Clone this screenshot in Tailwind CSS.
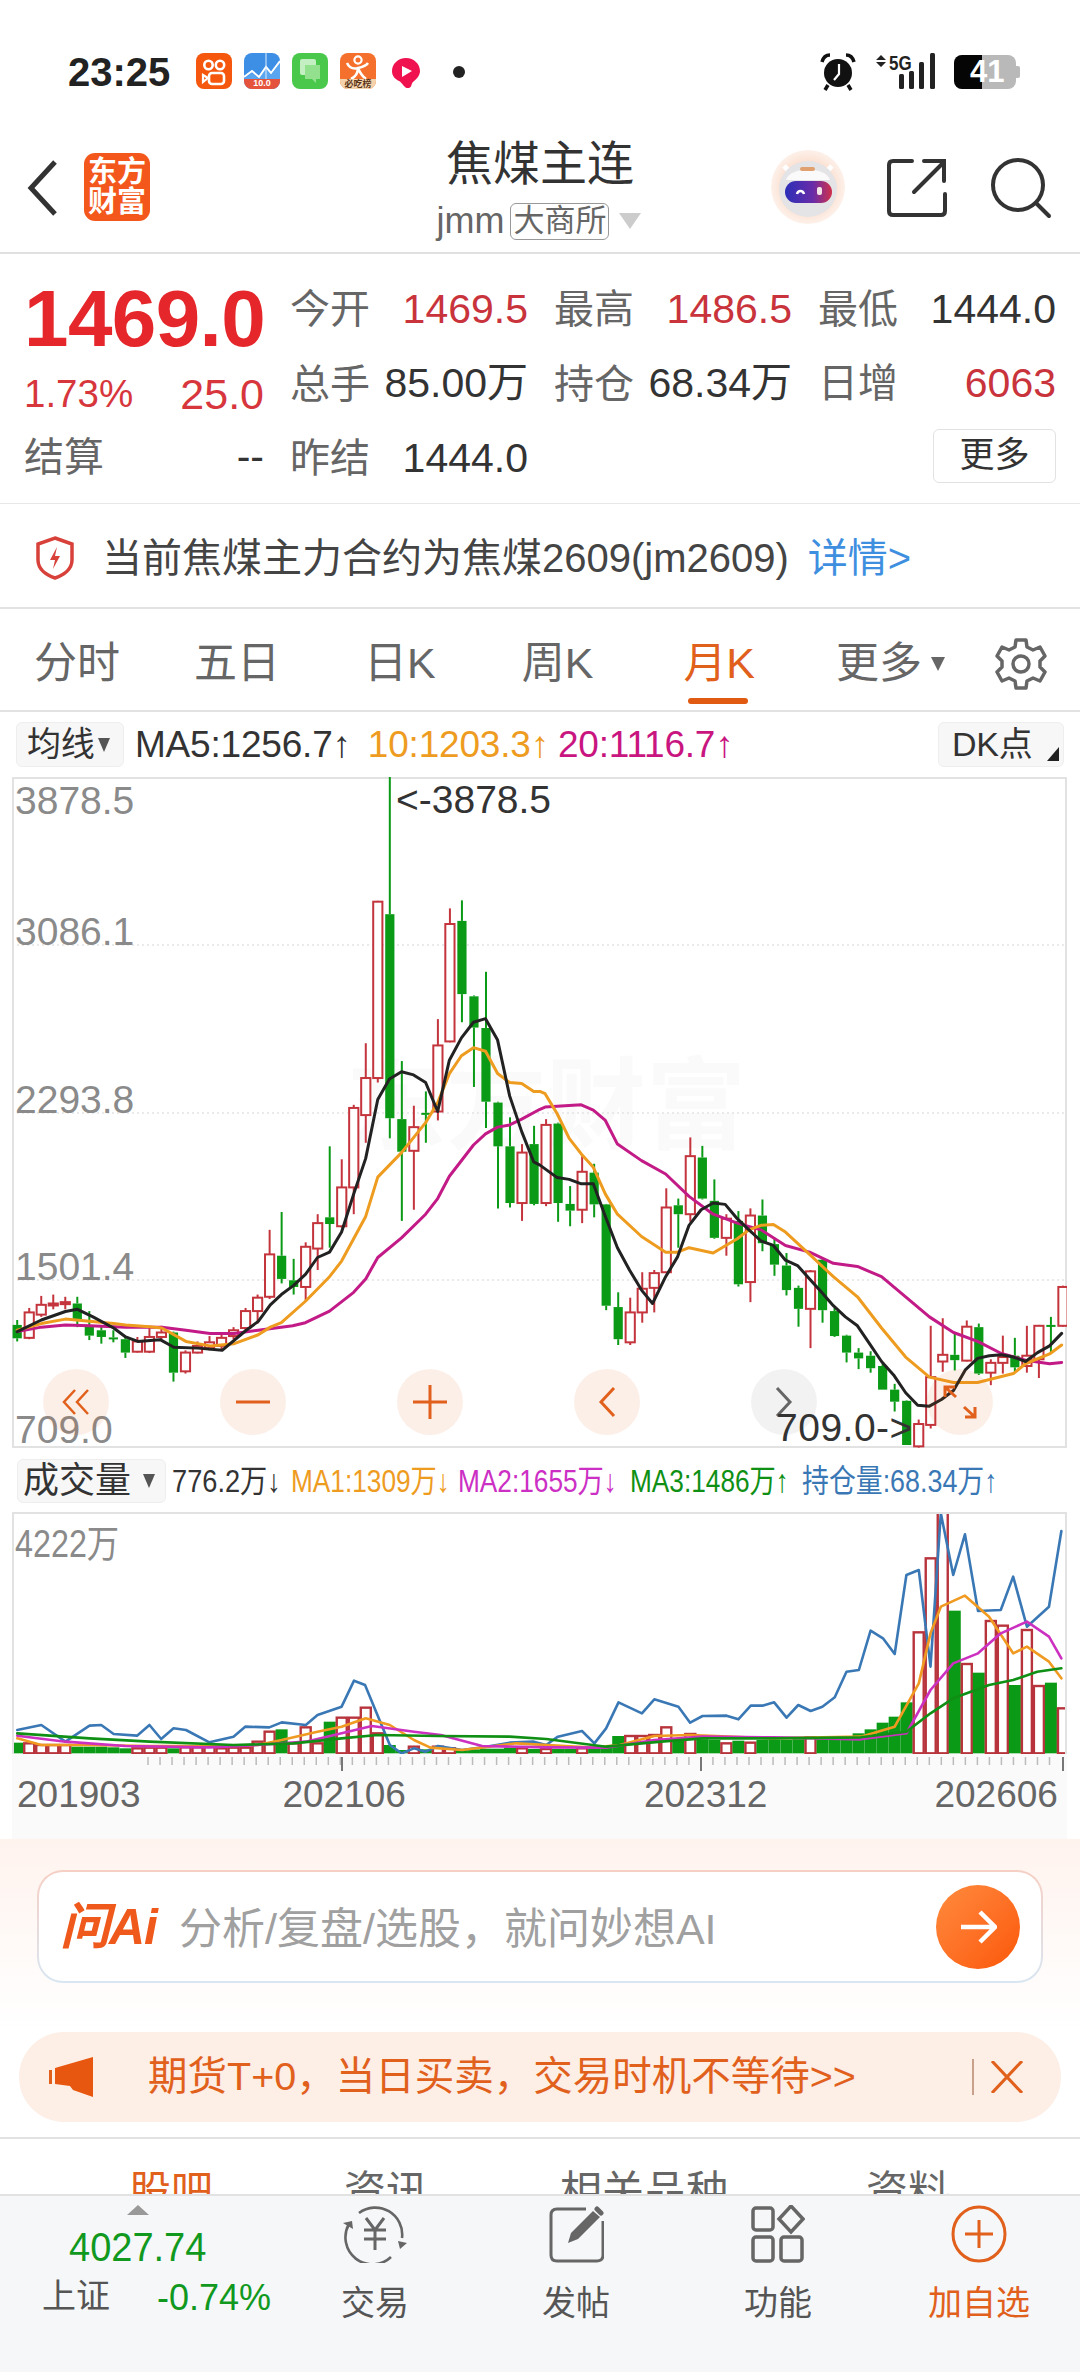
<!DOCTYPE html>
<html lang="zh">
<head>
<meta charset="UTF-8">
<title>焦煤主连</title>
<script src="https://cdn.jsdelivr.net/npm/@tailwindcss/browser@4"></script>
</head>
<body class="bg-white">
<div class="w-[1080px] h-[2372px] overflow-hidden flex flex-col bg-white text-[#333] font-['Liberation_Sans','Noto_Sans_CJK_SC',sans-serif]">

  <!-- status bar -->
  <div class="h-[115px] shrink-0 flex items-start pt-[53px] pl-[68px] pr-[60px]">
    <span class="w-[128px] h-[38px] leading-[38px] text-[40px] font-bold text-[#222]">23:25</span>
    <div class="flex items-start gap-[12px] h-[37px]">
      <svg width="36" height="36" viewBox="0 0 36 36"><rect width="36" height="36" rx="8" fill="#f4570d"/><circle cx="12.5" cy="12" r="4.2" fill="none" stroke="#fff" stroke-width="2.6"/><circle cx="24" cy="12" r="4.2" fill="none" stroke="#fff" stroke-width="2.6"/><rect x="13" y="20" width="15" height="11" rx="3" fill="none" stroke="#fff" stroke-width="2.6"/><path d="M12 25l-5-3v7z" fill="none" stroke="#fff" stroke-width="2.2"/></svg>
      <div class="relative w-[36px] h-[36px] rounded-[8px] overflow-hidden bg-[#3d8fe6]">
        <svg class="absolute inset-0" width="36" height="36" viewBox="0 0 36 36"><path d="M0 26L8 20l7 6 7-10 5 6 9-12v16H0z" fill="#5aa5ef"/><path d="M0 24l8-6 7 6 7-10 5 6 9-12" fill="none" stroke="#fff" stroke-width="2"/><path d="M22 0v27" stroke="#dfeefc" stroke-width="1"/><path d="M0 26h36v10H0z" fill="#e5533c"/></svg>
        <span class="absolute left-0 right-0 bottom-[1px] text-center text-[9px] leading-[10px] font-bold text-white">10.0</span>
      </div>
      <svg width="36" height="36" viewBox="0 0 36 36"><rect width="36" height="36" rx="8" fill="#49c84b"/><rect x="8" y="6" width="16" height="16" rx="2" fill="#c4efc2"/><path d="M13 12h15v14h-4v4l-4-4h-7z" fill="#93e08f"/></svg>
      <div class="relative w-[36px] h-[36px] rounded-[8px] overflow-hidden bg-[#f4702c]">
        <svg class="absolute inset-0" width="36" height="36" viewBox="0 0 36 36"><circle cx="18" cy="7" r="3.6" fill="none" stroke="#fff" stroke-width="2.2"/><path d="M7 10c3 6 8 6 11 5 5-1 8-2 10-5M18 15c0 6-3 9-7 11M18 15c2 5 4 8 8 11" fill="none" stroke="#fff" stroke-width="2.6"/></svg>
        <span class="absolute left-0 right-0 bottom-0 h-[10px] bg-[#f3d2ac] text-center text-[9px] leading-[10px] font-bold text-[#5a3418] whitespace-nowrap">必吃榜</span>
      </div>
      <svg class="ml-[4px] mt-[4px]" width="28" height="32" viewBox="0 0 28 32"><path d="M14 1C6 1 0 7 0 14c0 5 3 8 7 10 4 2 5 8 10 7 3-1 2-4 4-6 4-3 7-7 7-11C28 7 22 1 14 1z" fill="#f0124f"/><path d="M10 9l10 5-10 6z" fill="#fff"/></svg>
      <span class="ml-[21px] mt-[13px] w-[12px] h-[12px] rounded-full bg-[#222]"></span>
    </div>
    <div class="ml-auto flex items-start h-[37px]">
      <svg width="36" height="38" viewBox="0 0 36 38"><circle cx="18" cy="20" r="14" fill="#111"/><path d="M2 9c1-4 4-7 8-7M34 9c-1-4-4-7-8-7M8 32l-3 5M28 32l3 5" stroke="#111" stroke-width="3.5" fill="none"/><path d="M19 11v10l-5 6" stroke="#fff" stroke-width="2.2" fill="none"/></svg>
      <div class="relative w-[60px] h-[37px] ml-[20px]">
        <svg class="absolute left-0 top-0" width="60" height="37" viewBox="0 0 60 37"><path d="M0 7l5-5 5 5zM0 9l5 5 5-5z" fill="#222"/><rect x="23" y="21" width="5" height="15" rx="1.5" fill="#222"/><rect x="33" y="18" width="5" height="18" rx="1.5" fill="#222"/><rect x="43" y="9" width="5" height="27" rx="1.5" fill="#222"/><rect x="54" y="0" width="5" height="36" rx="1.5" fill="#222"/></svg>
        <span class="absolute left-[13px] top-[0px] text-[20px] leading-[20px] font-bold text-[#222] inline-block scale-x-[0.85] origin-left">5G</span>
      </div>
      <div class="relative w-[62px] h-[34px] ml-[18px] mt-[2px] rounded-[8px] bg-[#b9b9b9] overflow-hidden">
        <div class="absolute left-0 top-0 bottom-0 w-[28px] bg-[#050505]"></div>
        <span class="absolute left-[16px] top-0 leading-[34px] text-[31px] font-bold text-white">41</span>
      </div>
      <div class="w-[4px] h-[12px] mt-[13px] rounded-r-[2px] bg-[#b9b9b9]"></div>
    </div>
  </div>

  <!-- header -->
  <div class="h-[139px] shrink-0 flex relative border-b-2 border-[#e0e0e0]">
    <svg class="absolute left-[26px] top-[44px]" width="34" height="58" viewBox="0 0 34 58"><path d="M29 3L5 29l24 26" fill="none" stroke="#333" stroke-width="5"/></svg>
    <div class="absolute left-[84px] top-[38px] w-[66px] h-[68px] rounded-[11px] bg-[#f4571c] text-white font-bold text-[29px] leading-[30px] text-center pt-[4px]">东方<br>财富</div>
    <div class="w-full flex flex-col items-center pt-[23px]">
      <span class="text-[47px] leading-[52px] text-[#333]">焦煤主连</span>
      <div class="flex items-center mt-[12px] pr-[2px] h-[38px]">
        <span class="text-[36px] leading-[36px] text-[#666]">jmm</span>
        <span class="ml-[6px] px-[2px] h-[37px] leading-[33px] border border-[#999] rounded-[6px] text-[31px] text-[#666] whitespace-nowrap">大商所</span>
        <svg class="ml-[10px]" width="22" height="16" viewBox="0 0 22 16"><path d="M0 0h22L11 16z" fill="#ccc"/></svg>
      </div>
    </div>
    <svg class="absolute left-[770px] top-[33px]" width="76" height="78" viewBox="0 0 76 78"><defs><linearGradient id="visor"><stop offset="0" stop-color="#2b2fb8"/><stop offset="0.6" stop-color="#6a2ca8"/><stop offset="1" stop-color="#d0304a"/></linearGradient><radialGradient id="halo"><stop offset="0.6" stop-color="#fbdccb"/><stop offset="1" stop-color="#fdf1ea"/></radialGradient></defs><circle cx="38" cy="39" r="37" fill="url(#halo)"/><path d="M14 18l6 6M62 18l-6 6" stroke="#fff" stroke-width="5"/><ellipse cx="38" cy="41" rx="29" ry="28" fill="#e4e3e6"/><path d="M16 32c4-14 40-14 44 0z" fill="#fbfafa"/><rect x="30" y="19" width="15" height="4" rx="2" fill="#e0a070"/><rect x="15" y="33" width="47" height="22" rx="11" fill="url(#visor)"/><path d="M27 46c1-4 6-4 7 0" stroke="#fff" stroke-width="2.5" fill="none"/><rect x="47" y="39" width="5" height="8" rx="2" fill="#f4e4e8"/></svg>
    <svg class="absolute left-[886px] top-[43px]" width="62" height="60" viewBox="0 0 62 60"><path d="M26 3H7Q3 3 3 7v46q0 4 4 4h48q4 0 4-4V36" fill="none" stroke="#333" stroke-width="4" stroke-linecap="round"/><path d="M28 34L58 4M38 3h20v20" fill="none" stroke="#333" stroke-width="4" stroke-linecap="round"/></svg>
    <svg class="absolute left-[989px] top-[41px]" width="64" height="64" viewBox="0 0 64 64"><circle cx="29" cy="29" r="25" fill="none" stroke="#333" stroke-width="4"/><path d="M47 47l13 13" stroke="#333" stroke-width="4" stroke-linecap="round"/></svg>
  </div>

  <!-- quote -->
  <div class="h-[250px] shrink-0 border-b border-[#e8e8e8] pl-[24px] flex text-[41px]">
    <div class="w-[240px] pt-[35px] flex flex-col">
      <span class="text-[#e5262a] font-bold text-[80px] leading-[60px] tracking-[-0.6px] whitespace-nowrap">1469.0</span>
      <div class="flex justify-between items-center h-[44px] mt-[23px] text-[#d7363c]"><span class="text-[38.5px]">1.73%</span><span class="text-[43px]">25.0</span></div>
      <div class="flex justify-between items-center h-[44px] mt-[19px]"><span class="text-[40px] text-[#666]">结算</span><span>--</span></div>
    </div>
    <div class="ml-[26px] pt-[18px] grid grid-cols-[238px_238px_238px] grid-rows-[75px_74px_75px] gap-x-[26px] items-center">
      <div class="flex justify-between"><span class="text-[40px] text-[#666]">今开</span><span class="text-[#c9333b]">1469.5</span></div>
      <div class="flex justify-between"><span class="text-[40px] text-[#666]">最高</span><span class="text-[#c9333b]">1486.5</span></div>
      <div class="flex justify-between"><span class="text-[40px] text-[#666]">最低</span><span>1444.0</span></div>

      <div class="flex justify-between items-center"><span class="text-[40px] text-[#666]">总手</span><span>85.00万</span></div>
      <div class="flex justify-between items-center"><span class="text-[40px] text-[#666]">持仓</span><span>68.34万</span></div>
      <div class="flex justify-between"><span class="text-[40px] text-[#666]">日增</span><span class="text-[#c9333b]">6063</span></div>

      <div class="flex justify-between"><span class="text-[40px] text-[#666]">昨结</span><span>1444.0</span></div>
      <div></div>
      <div class="flex justify-end mb-[6px]"><span class="w-[123px] h-[54px] leading-[50px] text-center border border-[#e2e2e2] rounded-[6px] text-[35px]">更多</span></div>
    </div>
  </div>

  <!-- notice -->
  <div class="h-[105px] shrink-0 border-b-2 border-[#e2e2e2] flex items-center pl-[35px] pt-[4px]">
    <svg width="40" height="44" viewBox="0 0 40 44"><path d="M20 2l17 6v16c0 9-8 15-17 18C11 39 3 33 3 24V8z" fill="none" stroke="#d8403a" stroke-width="3.5"/><path d="M22 11l-7 13h5l-2 9 7-13h-5z" fill="#d8403a"/></svg>
    <span class="ml-[27px] text-[40px] text-[#444] whitespace-nowrap">当前焦煤主力合约为焦煤2609(jm2609)</span>
    <span class="ml-[19px] text-[40px] text-[#3f8fe0]">详情&gt;</span>
  </div>

  <!-- period tabs -->
  <div class="h-[103px] shrink-0 border-b-2 border-[#e2e2e2] flex items-center pl-[34px] pt-[8px] text-[43px] text-[#666] relative">
    <span>分时</span>
    <span class="ml-[74px]">五日</span>
    <span class="ml-[84px]">日K</span>
    <span class="ml-[86px]">周K</span>
    <span class="ml-[90px] text-[#e0601c]">月K</span>
    <span class="ml-[81px]">更多</span>
    <svg class="ml-[9px]" width="14" height="14" viewBox="0 0 14 14"><path d="M0 0h14L7 14z" fill="#666"/></svg>
    <svg class="ml-[50px]" width="52" height="54" viewBox="0 0 52 54"><path d="M21 3h10l1 7 6 3 7-3 5 9-5 5v6l5 5-5 9-7-3-6 3-1 7H21l-1-7-6-3-7 3-5-9 5-5v-6l-5-5 5-9 7 3 6-3z" fill="none" stroke="#666" stroke-width="3.5" stroke-linejoin="round"/><circle cx="26" cy="27" r="8" fill="none" stroke="#666" stroke-width="3.5"/></svg>
    <div class="absolute left-[688px] top-[89px] w-[60px] h-[6px] rounded-full bg-[#e05a12]"></div>
  </div>

  <!-- MA legend -->
  <div class="h-[65px] shrink-0 flex items-center pl-[16px] pr-[16px] text-[37px] tracking-[-0.2px]">
    <div class="w-[108px] h-[45px] rounded-[6px] bg-[#f7f7f7] border border-[#eee] flex items-center pl-[10px] text-[34px]">均线<svg class="ml-[3px]" width="12" height="14" viewBox="0 0 12 14"><path d="M0 0h12L6 14z" fill="#555"/></svg></div>
    <span class="ml-[11px] whitespace-nowrap">MA5:1256.7↑</span>
    <span class="ml-[17px] whitespace-nowrap text-[#ee9c1f]">10:1203.3↑</span>
    <span class="ml-[9px] whitespace-nowrap text-[#c9157f]">20:1116.7↑</span>
    <div class="relative ml-auto w-[126px] h-[45px] rounded-[6px] bg-[#f7f7f7] border border-[#eee] leading-[43px] pl-[13px] text-[34px]">DK点<svg class="absolute right-[4px] bottom-[5px]" width="12" height="14" viewBox="0 0 12 14"><path d="M12 0v14H0z" fill="#222"/></svg></div>
  </div>

  <!-- K-line chart -->
  <div class="relative ml-[12px] w-[1055px] h-[671px] shrink-0 border-2 border-[#e2e2e2]">
    <span class="absolute left-[332px] top-[272px] text-[100px] leading-[110px] font-bold text-[#fafafa] whitespace-nowrap">东方财富</span>
    <svg id="kline" class="absolute left-[-2px] top-[-2px]" width="1055" height="671" viewBox="12 777 1055 671"></svg>
    <span class="absolute left-[1px] top-[3px] text-[39px] leading-[38px] text-[#8a8a8a]">3878.5</span>
    <span class="absolute left-[1px] top-[134px] text-[39px] leading-[38px] text-[#8a8a8a]">3086.1</span>
    <span class="absolute left-[1px] top-[302px] text-[39px] leading-[38px] text-[#8a8a8a]">2293.8</span>
    <span class="absolute left-[1px] top-[469px] text-[39px] leading-[38px] text-[#8a8a8a]">1501.4</span>
    <span class="absolute left-[1px] top-[635px] text-[39px] leading-[32px] text-[#8a8a8a]">709.0</span>
    <span class="absolute left-[382px] top-[2px] text-[39px] leading-[38px] text-[#333]">&lt;-3878.5</span>
    <div class="absolute left-[29px] top-[590px] w-[66px] h-[66px] rounded-full bg-[#e0601c]/10 flex items-center justify-center"><svg width="30" height="30" viewBox="0 0 30 30"><path d="M14 3L3 15l11 12M27 3L16 15l11 12" fill="none" stroke="#e0601c" stroke-width="2.5"/></svg></div>
    <div class="absolute left-[206px] top-[590px] w-[66px] h-[66px] rounded-full bg-[#e0601c]/10 flex items-center justify-center"><svg width="34" height="4" viewBox="0 0 34 4"><path d="M0 2h34" stroke="#e0601c" stroke-width="3"/></svg></div>
    <div class="absolute left-[383px] top-[590px] w-[66px] h-[66px] rounded-full bg-[#e0601c]/10 flex items-center justify-center"><svg width="34" height="34" viewBox="0 0 34 34"><path d="M0 17h34M17 0v34" stroke="#e0601c" stroke-width="3"/></svg></div>
    <div class="absolute left-[560px] top-[590px] w-[66px] h-[66px] rounded-full bg-[#e0601c]/10 flex items-center justify-center"><svg width="18" height="32" viewBox="0 0 18 32"><path d="M16 2L3 16l13 14" fill="none" stroke="#e0601c" stroke-width="3"/></svg></div>
    <div class="absolute left-[737px] top-[590px] w-[66px] h-[66px] rounded-full bg-black/5 flex items-center justify-center"><svg width="18" height="32" viewBox="0 0 18 32"><path d="M2 2l13 14L2 30" fill="none" stroke="#666" stroke-width="3"/></svg></div>
    <div class="absolute left-[913px] top-[590px] w-[66px] h-[66px] rounded-full bg-[#e0601c]/10"><svg width="66" height="66" viewBox="0 0 66 66"><path d="M18 28v-10h10M18 18l11 10M48 38v10h-10M48 48L37 38" fill="none" stroke="#e0601c" stroke-width="3"/></svg></div>
    <span class="absolute left-[762px] top-[631px] text-[39px] leading-[36px] text-[#333] whitespace-nowrap tracking-[0.5px]">709.0-&gt;</span>
  </div>

  <!-- volume legend -->
  <div class="h-[64px] shrink-0 flex items-center pl-[17px] pt-[2px] text-[#333]">
    <div class="w-[149px] h-[44px] rounded-[6px] bg-[#f7f7f7] border border-[#eee] flex items-center pl-[5px] text-[36px]">成交量<svg class="ml-[12px]" width="12" height="14" viewBox="0 0 12 14"><path d="M0 0h12L6 14z" fill="#555"/></svg></div>
    <div class="ml-[6px] w-[119px] text-[32px] whitespace-nowrap"><span class="inline-block origin-left scale-x-[0.85]">776.2万↓</span></div>
    <div class="w-[167px] text-[32px] whitespace-nowrap text-[#ee9c1f]"><span class="inline-block origin-left scale-x-[0.82]">MA1:1309万↓</span></div>
    <div class="w-[172px] text-[32px] whitespace-nowrap text-[#cc2fc4]"><span class="inline-block origin-left scale-x-[0.82]">MA2:1655万↓</span></div>
    <div class="w-[172px] text-[32px] whitespace-nowrap text-[#0f9015]"><span class="inline-block origin-left scale-x-[0.82]">MA3:1486万↑</span></div>
    <div class="text-[32px] whitespace-nowrap text-[#3a78b5]"><span class="inline-block origin-left scale-x-[0.84]">持仓量:68.34万↑</span></div>
  </div>

  <!-- volume chart -->
  <div class="relative ml-[12px] w-[1055px] h-[242px] shrink-0 border-x-2 border-t-2 border-[#e2e2e2] overflow-hidden">
    <svg id="volume" class="absolute left-[-2px] top-[-2px]" width="1055" height="242" viewBox="12 1512 1055 242"></svg>
    <span class="absolute left-[1px] top-[8px] text-[38px] leading-[44px] text-[#8a8a8a] inline-block origin-left scale-x-[0.85] whitespace-nowrap">4222万</span>
  </div>

  <!-- time axis -->
  <div class="ml-[12px] w-[1055px] h-[85px] shrink-0 bg-[#fafafb] relative">
    <svg id="ticks" class="absolute left-0 top-0" width="1055" height="20" viewBox="12 1754 1055 20"></svg>
    <div class="absolute top-[25px] left-0 right-0 flex pl-[5px] text-[37px] leading-[32px] text-[#666]">
      <span>201903</span><span class="ml-[142px]">202106</span><span class="ml-[238px]">202312</span><span class="ml-[167px]">202606</span>
    </div>
  </div>

  <!-- ask AI -->
  <div class="h-[193px] shrink-0 bg-gradient-to-b from-[#fff3ee] to-white px-[37px] pt-[31px]">
    <div class="h-[113px] rounded-[26px] p-[2px] bg-gradient-to-b from-[#f6cfc4] to-[#d8e6f2]">
      <div class="h-full rounded-[24px] bg-white flex items-center pl-[21px] pr-[21px]">
        <span class="text-[50px] leading-[50px] font-bold italic text-[#ef5a1c] tracking-[-1px] whitespace-nowrap">问Ai</span>
        <span class="ml-[22px] pt-[5px] text-[43px] text-[#a0a0a0] whitespace-nowrap">分析/复盘/选股，就问妙想AI</span>
        <div class="ml-auto w-[84px] h-[84px] rounded-full bg-gradient-to-br from-[#ff8a3c] to-[#fb5600] flex items-center justify-center"><svg width="38" height="38" viewBox="0 0 38 38"><path d="M2 19h32M21 4l15 15-15 15" fill="none" stroke="#fff" stroke-width="4.5"/></svg></div>
      </div>
    </div>
  </div>

  <!-- promo -->
  <div class="h-[107px] shrink-0 px-[19px] border-b-2 border-[#e2e2e2] flex">
    <div class="w-[1043px] h-[90px] rounded-full bg-[#fdeee6] flex items-center pl-[30px] pr-[38px]">
      <svg width="46" height="40" viewBox="0 0 46 40"><rect y="13" width="3" height="14" fill="#e0601c"/><path d="M6 11L44 0v40L24 33l-3-4-15-2z" fill="#e8570f"/></svg>
      <span class="ml-[53px] text-[39.5px] text-[#e0601c] whitespace-nowrap">期货T+0，当日买卖，交易时机不等待&gt;&gt;</span>
      <span class="ml-auto w-[2px] h-[36px] bg-[#c9a08c]"></span>
      <svg class="ml-[17px]" width="32" height="32" viewBox="0 0 32 32"><path d="M1 0l30 32M31 0L1 32" stroke="#e0601c" stroke-width="3"/></svg>
    </div>
  </div>

  <!-- section tabs, cut off by the bottom bar -->
  <div class="h-[55px] shrink-0 overflow-hidden relative text-[42px] leading-[50px] text-[#666] pt-[28px] flex">
    <span class="ml-[129px] text-[#e0601c]">股吧</span>
    <span class="ml-[131px]">资讯</span>
    <span class="ml-[132px]">相关品种</span>
    <span class="ml-[138px]">资料</span>
  </div>

  <!-- bottom bar -->
  <div class="flex-1 bg-[#f6f7f9] border-t-2 border-[#e2e2e2] relative">
    <svg class="absolute left-[127px] top-[9px]" width="22" height="10" viewBox="0 0 22 10"><path d="M11 0l11 10H0z" fill="#999"/></svg>
    <span class="absolute left-[69px] top-[29px] text-[40px] leading-[44px] text-[#11991f] inline-block origin-left scale-x-[0.95]">4027.74</span>
    <span class="absolute left-[42px] top-[80px] text-[34px] leading-[40px] text-[#555]">上证</span>
    <span class="absolute left-[157px] top-[82px] text-[36px] leading-[40px] text-[#11991f] whitespace-nowrap">-0.74%</span>
    <div class="absolute left-[342px] top-[9px] w-[66px] flex flex-col items-center"><svg class="mb-[21px]" width="66" height="58" viewBox="0 0 66 58"><path d="M17 8A27 27 0 0 1 60 33M49 52A27 27 0 0 1 7 19" fill="none" stroke="#666" stroke-width="2.6"/><path d="M1 18l9-2 1 8zM56 36l9 2-7 6z" fill="#666"/><path d="M24 13l9 12 9-12M22 25h22M22 34h22M33 25v20" fill="none" stroke="#666" stroke-width="3"/></svg><span class="text-[34px] leading-[38px] text-[#555] whitespace-nowrap">交易</span></div>
    <div class="absolute left-[543px] top-[9px] w-[66px] flex flex-col items-center"><svg class="mb-[21px]" width="56" height="58" viewBox="0 0 56 58"><path d="M38 4H9Q3 4 3 10v40q0 6 6 6h40q6 0 6-6V16" fill="none" stroke="#666" stroke-width="3"/><path d="M20 38l3-10 22-22 7 6-22 22z" fill="#666"/><path d="M49 4l4 4" stroke="#666" stroke-width="5" stroke-linecap="round"/></svg><span class="text-[34px] leading-[38px] text-[#555] whitespace-nowrap">发帖</span></div>
    <div class="absolute left-[745px] top-[9px] w-[66px] flex flex-col items-center"><svg class="mb-[21px]" width="54" height="58" viewBox="0 0 54 58"><rect x="2" y="3" width="20" height="22" rx="3" fill="none" stroke="#666" stroke-width="3.5"/><path d="M40 1l12 13-12 13-12-13z" fill="none" stroke="#666" stroke-width="3.5"/><rect x="2" y="32" width="20" height="24" rx="3" fill="none" stroke="#666" stroke-width="3.5"/><rect x="30" y="32" width="21" height="24" rx="3" fill="none" stroke="#666" stroke-width="3.5"/></svg><span class="text-[34px] leading-[38px] text-[#555] whitespace-nowrap">功能</span></div>
    <div class="absolute left-[926px] top-[9px] w-[106px] flex flex-col items-center"><svg class="mb-[21px]" width="56" height="58" viewBox="0 0 56 58"><ellipse cx="28" cy="29" rx="26" ry="27" fill="none" stroke="#e0601c" stroke-width="3"/><path d="M14 29h28M28 15v28" stroke="#e0601c" stroke-width="3"/></svg><span class="text-[34px] leading-[38px] text-[#e0601c] whitespace-nowrap">加自选</span></div>
  </div>
</div>

<script>
  const NS = 'http://www.w3.org/2000/svg';
  const RED = '#c4343c', GREEN = '#0b9a16';

  function add(svg, tag, attrs) {
    const el = document.createElementNS(NS, tag);
    for (const k in attrs) el.setAttribute(k, attrs[k]);
    svg.appendChild(el);
  }

  // [red?, high, top, bottom, low], y read off the reference
  const candles = [
    [0,1232,1243,1273,1280],[1,1205,1215,1272,1275],[1,1178,1198,1220,1225],[1,1175,1195,1198,1208],[1,1180,1192,1195,1208],
    [0,1180,1195,1232,1248],[0,1212,1245,1267,1277],[0,1245,1255,1270,1285],[0,1255,1271,1273,1282],[0,1270,1275,1305,1317],
    [1,1270,1280,1303,1305],[1,1245,1270,1303,1306],[1,1245,1260,1270,1275],[0,1258,1260,1350,1370],[1,1300,1305,1347,1352],
    [1,1280,1290,1305,1307],[1,1268,1282,1295,1300],[1,1262,1272,1290,1298],[1,1248,1255,1268,1275],[1,1205,1212,1250,1255],
    [1,1175,1182,1212,1240],[1,1030,1085,1180,1185],[0,990,1088,1140,1150],[0,1095,1143,1158,1175],[1,1058,1068,1158,1190],
    [1,995,1015,1072,1120],[0,843,1002,1017,1070],[1,872,935,1022,1025],[1,750,757,935,995],[1,612,690,773,835],
    [1,293,295,690,700],[0,15,323,780,825],[0,652,782,855,1010],[1,752,800,853,985],[0,720,768,772,835],
    [1,558,617,765,785],[1,310,345,608,610],[0,292,338,502,565],[0,505,507,577,710],[0,452,578,743,802],
    [0,743,745,843,982],[0,778,843,970,980],[1,838,857,970,1010],[0,797,838,972,975],[1,782,795,970,977],
    [0,790,792,970,1012],[0,932,972,987,1022],[1,865,900,985,1015],[0,882,902,973,1002],[0,972,973,1200,1210],
    [0,1170,1203,1275,1288],[1,1182,1215,1282,1288],[1,1125,1162,1215,1238],[1,1120,1127,1160,1215],[1,937,980,1125,1127],
    [0,960,975,995,1070],[1,823,865,995,1012],[0,842,868,960,962],[0,917,965,1048,1050],[1,995,1005,1048,1088],
    [0,988,1010,1152,1157],[1,982,998,1147,1192],[0,962,998,1060,1078],[0,1048,1062,1108,1133],[0,1082,1110,1165,1177],
    [0,1155,1160,1207,1247],[1,1120,1123,1207,1295],[0,1095,1097,1210,1238],[0,1205,1212,1268,1270],[0,1265,1267,1305,1327],
    [0,1295,1305,1318,1342],[0,1302,1312,1340,1350],[0,1330,1335,1388,1388],[0,1375,1388,1415,1437],[0,1412,1413,1512,1512],
    [1,1455,1465,1515,1518],[1,1245,1360,1467,1475],[1,1228,1310,1325,1348],[0,1260,1310,1322,1345],[1,1233,1247,1323,1325],
    [0,1240,1248,1352,1355],[1,1320,1328,1350,1378],[1,1267,1315,1328,1352],[0,1272,1312,1338,1348],[1,1245,1312,1335,1350],
    [1,1243,1245,1320,1362],[0,1225,1243,1245,1308],[1,1155,1158,1245,1247]
  ];

  const ma5 = [50,1258,120,1232,190,1213,225,1208,270,1225,330,1250,365,1270,400,1280,465,1276,505,1293,575,1295,645,1300,715,1255,750,1235,785,1198,817,1175,852,1155,887,1130,922,1092,957,1080,992,1035,1027,950,1062,870,1097,738,1131,692,1166,676,1201,683,1236,700,1271,765,1305,650,1340,600,1375,565,1410,557,1445,605,1480,730,1515,810,1550,878,1568,885,1618,913,1653,917,1688,927,1723,927,1758,1000,1793,1070,1828,1120,1863,1165,1895,1195,1933,1135,1968,1090,2001,1020,2036,985,2071,970,2106,973,2141,1005,2175,1030,2210,1055,2246,1065,2281,1098,2316,1110,2351,1140,2386,1170,2420,1200,2455,1225,2490,1245,2525,1285,2560,1325,2595,1355,2630,1395,2665,1423,2699,1425,2734,1410,2769,1390,2804,1343,2839,1318,2873,1312,2908,1310,2943,1315,2978,1325,3013,1305,3048,1290,3083,1262];
  const ma10 = [50,1255,120,1240,190,1230,260,1235,330,1240,365,1243,435,1247,470,1250,540,1280,610,1290,680,1285,750,1265,785,1248,817,1238,887,1190,957,1135,992,1100,1027,1050,1062,1000,1097,912,1166,857,1236,790,1271,745,1305,680,1340,640,1375,622,1410,630,1445,680,1480,700,1515,702,1550,720,1568,720,1583,725,1618,770,1653,825,1688,860,1723,890,1758,950,1793,995,1863,1045,1933,1080,1968,1080,2001,1070,2071,1082,2141,1050,2175,1030,2210,1020,2246,1018,2281,1035,2351,1085,2420,1135,2490,1180,2560,1250,2630,1315,2699,1360,2769,1372,2839,1372,2943,1352,2978,1330,3048,1308,3083,1288];
  const ma20 = [50,1258,120,1248,190,1243,260,1245,365,1248,470,1248,540,1255,610,1262,680,1262,750,1255,850,1245,887,1238,957,1212,1027,1170,1062,1140,1097,1092,1166,1048,1236,995,1271,960,1305,910,1375,840,1410,815,1445,800,1480,795,1515,782,1568,760,1583,755,1688,750,1723,762,1758,785,1793,838,1863,875,1933,905,2001,955,2071,995,2141,1015,2210,1030,2281,1065,2351,1080,2420,1105,2490,1112,2560,1135,2630,1180,2699,1225,2769,1260,2839,1280,2908,1307,2978,1322,3048,1330,3083,1327];

  const kline = document.getElementById('kline');
  const ky = py => 770 + py / 2.24;

  [945, 1113, 1280].forEach(y => add(kline, 'line', { x1: 12, x2: 1067, y1: y, y2: y, stroke: '#e4e4e4', 'stroke-width': 1.5, 'stroke-dasharray': '2 3' }));

  candles.forEach((c, i) => {
    const x = 17.2 + 12.02 * i;
    const color = c[0] ? RED : GREEN;
    add(kline, 'line', { x1: x, x2: x, y1: ky(c[1]), y2: ky(c[2]), stroke: color, 'stroke-width': 2 });
    add(kline, 'line', { x1: x, x2: x, y1: ky(c[3]), y2: ky(c[4]), stroke: color, 'stroke-width': 2 });
    const h = Math.max(ky(c[3]) - ky(c[2]), 2);
    if (c[0]) add(kline, 'rect', { x: x - 4.6, y: ky(c[2]), width: 9.2, height: h, fill: '#fff', stroke: color, 'stroke-width': 2 });
    else add(kline, 'rect', { x: x - 4.6, y: ky(c[2]), width: 9.2, height: h, fill: color });
  });

  function line(svg, pts, color, fx, fy, w) {
    let p = '';
    for (let i = 0; i < pts.length; i += 2) p += fx(pts[i]) + ',' + fy(pts[i + 1]) + ' ';
    add(svg, 'polyline', { points: p, fill: 'none', stroke: color, 'stroke-width': w, 'stroke-linejoin': 'round', 'stroke-linecap': 'round' });
  }

  const kx = px => px / 2.904;
  line(kline, ma20, '#c21a86', kx, ky, 3);
  line(kline, ma10, '#ee9c1f', kx, ky, 3);
  line(kline, ma5, '#222', kx, ky, 3);

  // volume bars: plus = red, minus = green, value is the bar top
  const bars = [-878,880,885,885,885,-890,-890,-890,-892,-895,895,893,893,-895,892,892,890,895,893,893,875,845,-838,880,832,880,-815,803,803,773,850,-885,-900,890,-898,890,895,-900,-898,-896,-896,-893,895,-897,897,-897,-897,895,-893,-890,-858,858,858,855,832,-865,852,-868,-870,880,-872,878,-870,-870,-870,-868,862,-868,-866,-860,-850,-838,-818,-800,-757,547,325,188,-482,642,-668,513,527,-705,540,708,-698,775];
  const volume = document.getElementById('volume');
  const vx = px => px / 1.4519;
  const vy = py => 1450 + py / 3;
  const base = vy(910);

  bars.forEach((b, i) => {
    const x = 17.2 + 12.02 * i;
    const top = vy(Math.abs(b));
    if (b > 0) add(volume, 'rect', { x: x - 5, y: top, width: 10, height: base - top, fill: '#fff', stroke: '#b8343c', 'stroke-width': 2.4 });
    else add(volume, 'rect', { x: x - 6, y: top, width: 12, height: base - top, fill: GREEN });
  });

  const vBlue = [25,840,60,825,95,875,130,827,147,825,165,852,199,857,217,825,234,867,252,835,270,840,304,877,339,860,356,830,391,832,409,817,444,825,461,795,496,770,514,692,530,705,566,885,583,910,601,895,618,905,636,888,671,900,706,890,740,878,775,875,793,885,810,860,845,843,863,880,880,835,898,757,932,790,950,748,985,770,1002,818,1020,798,1055,797,1072,808,1090,767,1107,767,1124,757,1142,803,1159,765,1177,783,1194,770,1212,742,1229,665,1247,660,1264,542,1282,565,1299,612,1316,375,1334,360,1351,650,1366,190,1384,375,1401,253,1420,483,1453,480,1471,380,1491,530,1523,470,1541,243];
  const vOrange = [25,865,60,885,130,885,217,888,304,888,374,885,409,870,461,845,496,830,531,805,566,825,601,870,625,893,671,900,750,880,860,893,900,885,950,858,1002,855,1040,858,1120,865,1250,860,1299,830,1334,700,1351,550,1366,470,1401,437,1436,500,1471,610,1491,590,1523,635,1541,685];
  const vPurple = [25,857,95,875,182,888,304,892,374,885,444,875,496,850,540,828,601,845,640,855,700,888,793,892,880,893,950,870,1020,860,1125,862,1250,868,1316,850,1351,720,1384,640,1420,610,1453,550,1491,515,1523,560,1541,625];
  const vGreen = [25,850,130,865,217,875,339,885,426,880,496,865,548,855,636,858,740,860,793,867,880,890,960,875,1020,865,1125,865,1250,862,1316,845,1351,790,1384,745,1436,705,1471,690,1506,665,1541,655];
  line(volume, vBlue, '#3a78b5', vx, vy, 2.6);
  line(volume, vOrange, '#f09a22', vx, vy, 2.6);
  line(volume, vPurple, '#cc30c0', vx, vy, 2.6);
  line(volume, vGreen, '#0f9015', vx, vy, 2.6);

  const ticks = document.getElementById('ticks');
  for (let x = 148; x < 1058; x += 12.02) add(ticks, 'line', { x1: x, x2: x, y1: 1757, y2: 1765, stroke: '#bbb', 'stroke-width': 1.5 });
  [342, 701, 1063].forEach(x => add(ticks, 'line', { x1: x, x2: x, y1: 1757, y2: 1771, stroke: '#777', 'stroke-width': 2 }));
</script>
</body>
</html>
